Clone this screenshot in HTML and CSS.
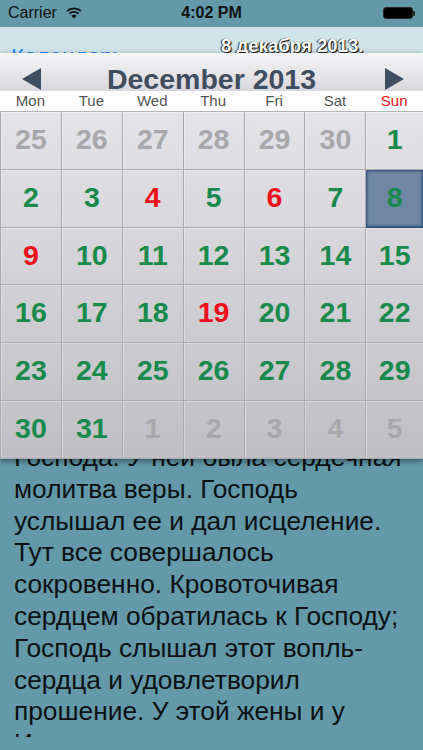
FILE: index.html
```html
<!DOCTYPE html>
<html lang="ru">
<head>
<meta charset="utf-8">
<title>Calendar</title>
<link rel="stylesheet" href="styles.css">
</head>
<body>
<div class="phone">
  <div class="status">
    <div class="status-left">
      <span>Carrier</span>
      <svg class="wifi" viewBox="0 0 16 12" width="16" height="12"><path d="M1 4.2C5 .4 11 .4 15 4.2" fill="none" stroke="#111" stroke-width="1.7"/><path d="M3.4 6.6C6 4.2 10 4.2 12.6 6.6" fill="none" stroke="#111" stroke-width="1.7"/><path d="M8 11.5 5.3 8.7C6.8 7.4 9.2 7.4 10.7 8.7Z" fill="#111"/></svg>
    </div>
    <div class="status-time">4:02 PM</div>
    <div class="status-right"><span class="battery"></span><span class="battery-tip"></span></div>
  </div>
  <div class="nav">
    <span class="back">Календарь</span>
    <span class="nav-date">8 декабря 2013.</span>
  </div>
  <div class="calendar">
    <div class="cal-head">
      <svg class="arrow" viewBox="0 0 19 22" width="19" height="22"><path d="M0 11 19 0V22Z" fill="#3f4d60"/></svg>
      <div class="month">December 2013</div>
      <svg class="arrow" viewBox="0 0 19 22" width="19" height="22"><path d="M19 11 0 0V22Z" fill="#3f4d60"/></svg>
    </div>
    <div class="weekdays">
      <span>Mon</span><span>Tue</span><span>Wed</span><span>Thu</span><span>Fri</span><span>Sat</span><span class="sun">Sun</span>
    </div>
    <div class="grid">
      <div class="cell off">25</div><div class="cell off">26</div><div class="cell off">27</div><div class="cell off">28</div><div class="cell off">29</div><div class="cell off">30</div><div class="cell">1</div>
      <div class="cell">2</div><div class="cell">3</div><div class="cell red">4</div><div class="cell">5</div><div class="cell red">6</div><div class="cell">7</div><div class="cell selected">8</div>
      <div class="cell red">9</div><div class="cell">10</div><div class="cell">11</div><div class="cell">12</div><div class="cell">13</div><div class="cell">14</div><div class="cell">15</div>
      <div class="cell">16</div><div class="cell">17</div><div class="cell">18</div><div class="cell red">19</div><div class="cell">20</div><div class="cell">21</div><div class="cell">22</div>
      <div class="cell">23</div><div class="cell">24</div><div class="cell">25</div><div class="cell">26</div><div class="cell">27</div><div class="cell">28</div><div class="cell">29</div>
      <div class="cell">30</div><div class="cell">31</div><div class="cell off">1</div><div class="cell off">2</div><div class="cell off">3</div><div class="cell off">4</div><div class="cell off">5</div>
    </div>
  </div>
  <div class="reading">
    <p class="reading-text">Господа. У ней была сердечная<br>молитва веры. Господь<br>услышал ее и дал исцеление.<br>Тут все совершалось<br>сокровенно. Кровоточивая<br>сердцем обратилась к Господу;<br>Господь слышал этот вопль-<br>сердца и удовлетворил<br>прошение. У этой жены и у<br>Иаира молитва, по существу,</p>
  </div>
</div>
</body>
</html>
```
FILE: styles.css
```css
* { box-sizing: border-box; }
html, body { margin: 0; padding: 0; }
body { width: 423px; height: 750px; overflow: hidden; background: #6399a9; font-family: "Liberation Sans", Arial, sans-serif; }
.phone { width: 423px; height: 750px; display: flex; flex-direction: column; overflow: hidden; background: #6399a9; }

.status { height: 27px; flex: none; display: flex; align-items: center; justify-content: space-between; padding: 0 8px 1px 8px; background: #6399a9; color: #111; }
.status-left { display: flex; align-items: center; gap: 9px; width: 130px; font-size: 16px; }
.status-time { font-weight: 700; font-size: 16px; }
.status-right { width: 130px; display: flex; align-items: center; justify-content: flex-end; }
.battery { width: 30px; height: 12px; background: #000; border-radius: 3px; border: 1px solid #2a2a2a; }
.battery-tip { width: 2px; height: 5px; background: #222; border-radius: 0 1px 1px 0; }

.nav { height: 26px; flex: none; background: #d0e5ea; overflow: hidden; position: relative; }
.back { color: #1c86ee; font-size: 22.4px; position: absolute; left: 11px; top: 17px; }
.nav-date { color: #fff; font-size: 18.6px; font-weight: 700; position: absolute; left: 221px; top: 8px; text-shadow: 1px 1px 1px #000, -1px 0 1px #333; white-space: nowrap; }

.calendar { flex: none; display: flex; flex-direction: column; box-shadow: 0 2px 6px rgba(0,0,0,.45); position: relative; z-index: 1; }
.cal-head { height: 38px; display: flex; align-items: center; justify-content: space-between; padding: 17px 19px 4px 22px; background: linear-gradient(#f6f6f8, #d8d8dc); }
.month { font-size: 28.5px; font-weight: 700; color: #3f4d60; line-height: 24px; margin-right: 3px; }
.weekdays { height: 21px; background: #fff; display: grid; grid-template-columns: repeat(6, 60.9px) 1fr; border-bottom: 1px solid #b4b4b8; text-align: center; font-size: 15px; line-height: 19px; color: #555; }
.sun { color: #e8101c; }
.grid { height: 347px; display: grid; grid-template-columns: repeat(6, 60.9px) 1fr; grid-template-rows: repeat(6, 1fr); background: linear-gradient(#e3e3e8, #bfbfc3); border-left: 1px solid #a9a9ae; }
.cell { display: flex; align-items: center; justify-content: center; padding-bottom: 2px; font-size: 28.5px; font-weight: 700; color: #188b4c; border-right: 1px solid #a9a9ae; border-bottom: 1px solid #a9a9ae; box-shadow: inset 1px 1px 0 rgba(255,255,255,.35); }
.cell:nth-child(7n) { border-right: 0; }
.cell.off { color: #a8a8ab; }
.cell.red { color: #f0101c; }
.cell.selected { background: #6f86a5; box-shadow: inset 0 0 3px 1px #2c4a78; border-color: #2c4a78; }

.reading { height: 278px; flex: none; overflow: hidden; padding: 0 14px; background: #6399a9; }
.reading-text { margin: -17px 0 0; font-size: 26.3px; line-height: 31.8px; color: #0c1114; white-space: nowrap; }
```
